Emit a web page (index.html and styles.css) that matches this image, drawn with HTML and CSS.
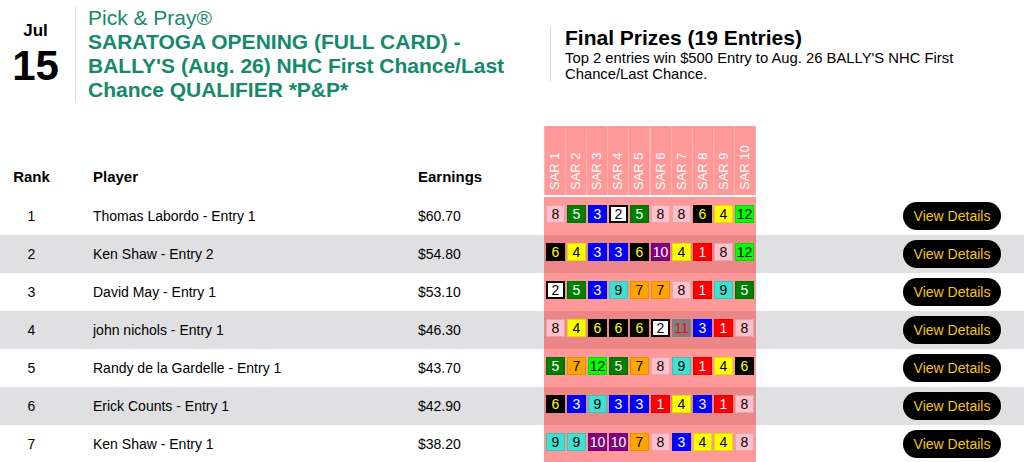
FILE: index.html
```html
<!DOCTYPE html>
<html lang="en">
<head>
<meta charset="utf-8">
<title>Pick &amp; Pray Leaderboard</title>
<link rel="stylesheet" href="styles.css">
</head>
<body>
<header class="header">
  <div class="date">
    <div class="month">Jul</div>
    <div class="day">15</div>
  </div>
  <div class="title-block">
    <div class="brand">Pick &amp; Pray®</div>
    <div class="event">SARATOGA OPENING (FULL CARD) - BALLY'S (Aug. 26) NHC First Chance/Last Chance QUALIFIER *P&amp;P*</div>
  </div>
  <div class="prizes">
    <h2>Final Prizes (19 Entries)</h2>
    <p>Top 2 entries win $500 Entry to Aug. 26 BALLY'S NHC First Chance/Last Chance.</p>
  </div>
</header>

<table class="board">
  <colgroup>
    <col class="c-rank"><col class="c-player"><col class="c-earn"><col class="c-sar"><col class="c-action">
  </colgroup>
  <thead>
    <tr>
      <th class="rank">Rank</th>
      <th class="player">Player</th>
      <th class="earn">Earnings</th>
      <th class="sar">
        <div class="sar-labels">
          <span>SAR 1</span><span>SAR 2</span><span>SAR 3</span><span>SAR 4</span><span>SAR 5</span><span>SAR 6</span><span>SAR 7</span><span>SAR 8</span><span>SAR 9</span><span>SAR 10</span>
        </div>
      </th>
      <th class="action"></th>
    </tr>
  </thead>
  <tbody>
    <tr>
      <td class="rank">1</td><td class="player">Thomas Labordo - Entry 1</td><td class="earn">$60.70</td>
      <td class="sar"><div class="boxes"><span class="b p8">8</span><span class="b p5">5</span><span class="b p3">3</span><span class="b p2">2</span><span class="b p5">5</span><span class="b p8">8</span><span class="b p8">8</span><span class="b p6">6</span><span class="b p4">4</span><span class="b p12">12</span></div></td>
      <td class="action"><a class="btn">View Details</a></td>
    </tr>
    <tr>
      <td class="rank">2</td><td class="player">Ken Shaw - Entry 2</td><td class="earn">$54.80</td>
      <td class="sar"><div class="boxes"><span class="b p6">6</span><span class="b p4">4</span><span class="b p3">3</span><span class="b p3">3</span><span class="b p6">6</span><span class="b p10">10</span><span class="b p4">4</span><span class="b p1">1</span><span class="b p8">8</span><span class="b p12">12</span></div></td>
      <td class="action"><a class="btn">View Details</a></td>
    </tr>
    <tr>
      <td class="rank">3</td><td class="player">David May - Entry 1</td><td class="earn">$53.10</td>
      <td class="sar"><div class="boxes"><span class="b p2">2</span><span class="b p5">5</span><span class="b p3">3</span><span class="b p9">9</span><span class="b p7">7</span><span class="b p7">7</span><span class="b p8">8</span><span class="b p1">1</span><span class="b p9">9</span><span class="b p5">5</span></div></td>
      <td class="action"><a class="btn">View Details</a></td>
    </tr>
    <tr>
      <td class="rank">4</td><td class="player">john nichols - Entry 1</td><td class="earn">$46.30</td>
      <td class="sar"><div class="boxes"><span class="b p8">8</span><span class="b p4">4</span><span class="b p6">6</span><span class="b p6">6</span><span class="b p6">6</span><span class="b p2">2</span><span class="b p11">11</span><span class="b p3">3</span><span class="b p1">1</span><span class="b p8">8</span></div></td>
      <td class="action"><a class="btn">View Details</a></td>
    </tr>
    <tr>
      <td class="rank">5</td><td class="player">Randy de la Gardelle - Entry 1</td><td class="earn">$43.70</td>
      <td class="sar"><div class="boxes"><span class="b p5">5</span><span class="b p7">7</span><span class="b p12">12</span><span class="b p5">5</span><span class="b p7">7</span><span class="b p8">8</span><span class="b p9">9</span><span class="b p1">1</span><span class="b p4">4</span><span class="b p6">6</span></div></td>
      <td class="action"><a class="btn">View Details</a></td>
    </tr>
    <tr>
      <td class="rank">6</td><td class="player">Erick Counts - Entry 1</td><td class="earn">$42.90</td>
      <td class="sar"><div class="boxes"><span class="b p6">6</span><span class="b p3">3</span><span class="b p9">9</span><span class="b p3">3</span><span class="b p3">3</span><span class="b p1">1</span><span class="b p4">4</span><span class="b p3">3</span><span class="b p1">1</span><span class="b p8">8</span></div></td>
      <td class="action"><a class="btn">View Details</a></td>
    </tr>
    <tr>
      <td class="rank">7</td><td class="player">Ken Shaw - Entry 1</td><td class="earn">$38.20</td>
      <td class="sar"><div class="boxes"><span class="b p9">9</span><span class="b p9">9</span><span class="b p10">10</span><span class="b p10">10</span><span class="b p7">7</span><span class="b p8">8</span><span class="b p3">3</span><span class="b p4">4</span><span class="b p4">4</span><span class="b p8">8</span></div></td>
      <td class="action"><a class="btn">View Details</a></td>
    </tr>
  </tbody>
</table>
</body>
</html>
```

FILE: styles.css
```css
html, body {
  margin: 0;
  padding: 0;
  background: #fff;
}
body {
  font-family: "Liberation Sans", Arial, Helvetica, sans-serif;
  color: #000;
}

/* ---------- header ---------- */
.header {
  display: flex;
  align-items: center;
  padding-top: 6px;
}
.date {
  align-self: stretch;
  width: 76px;
  box-sizing: border-box;
  padding-right: 4px;
  border-right: 1px solid #dcdcdc;
  display: flex;
  flex-direction: column;
  justify-content: center;
  align-items: center;
  font-weight: bold;
}
.month {
  font-size: 17px;
  line-height: 18px;
  margin-top: 2px;
}
.day {
  font-size: 42px;
  line-height: 44px;
  margin-top: 4px;
}
.title-block {
  margin-left: 12px;
  width: 440px;
  color: #15896b;
  font-size: 21px;
  line-height: 24px;
}
.brand {
  font-weight: normal;
}
.event {
  font-weight: bold;
}
.prizes {
  margin-left: 22px;
  padding-left: 14px;
  border-left: 1px solid #dcdcdc;
  width: 430px;
}
.prizes h2 {
  margin: 0;
  font-size: 21px;
  line-height: 24px;
  font-weight: bold;
}
.prizes p {
  margin: 0;
  font-size: 14.8px;
  line-height: 16px;
}

/* ---------- table ---------- */
.board {
  margin-top: 24px;
  width: 100%;
  border-collapse: separate;
  border-spacing: 0;
  table-layout: fixed;
  font-size: 14px;
}
.c-rank { width: 63px; }
.c-player { width: 355px; }
.c-earn { width: 126px; }
.c-sar { width: 212px; }

.board th {
  padding: 0 0 10px 0;
  vertical-align: bottom;
  text-align: left;
  font-weight: bold;
  font-size: 15px;
  line-height: 16px;
  border-bottom: 2px solid #fff;
}
.board th.rank,
.board td.rank {
  text-align: center;
}
.board th.player,
.board td.player {
  padding-left: 30px;
}
.board th.sar {
  padding: 0;
  background: #ffb2b2;
}
.sar-labels {
  display: grid;
  grid-template-columns: repeat(10, 1fr);
  column-gap: 1px;
  height: 69px;
  padding: 0 1px;
}
.sar-labels span {
  background: #ff9999;
  writing-mode: vertical-rl;
  transform: rotate(180deg);
  color: #fff;
  font-size: 13px;
  font-weight: normal;
  line-height: 20px;
  padding-top: 5px;
  white-space: nowrap;
}

.board td {
  height: 38px;
  padding: 0;
  vertical-align: middle;
  line-height: 16px;
}
.board tbody tr:nth-child(even) {
  background: #e0e0e2;
}
.board td.sar {
  background: rgba(255, 0, 0, 0.4);
}
.boxes {
  display: flex;
  gap: 2px;
  padding: 0 2px 5px 2px;
}
.b {
  width: 19px;
  height: 18px;
  box-sizing: border-box;
  display: flex;
  align-items: center;
  justify-content: center;
  font-size: 14px;
  border: 1px solid rgba(0, 0, 0, 0.12);
}
.p1 { background: #ff0000; color: #fff; }
.p2 { background: #fff; color: #000; border: 2px solid #000; }
.p3 { background: #0000ff; color: #fff; }
.p4 { background: #ffff00; color: #000; }
.p5 { background: #008000; color: #fff; }
.p6 { background: #000; color: #ffff00; }
.p7 { background: #ffa500; color: #000; }
.p8 { background: #ffc0cb; color: #000; }
.p9 { background: #40e0d0; color: #000; }
.p10 { background: #800080; color: #fff; }
.p11 { background: #808080; color: #ff0000; border-color: #808080; }
.p12 { background: #00ff00; color: #000; }

.board td.action {
  text-align: right;
  padding-right: 23px;
}
.btn {
  display: inline-block;
  width: 98px;
  height: 28px;
  line-height: 28px;
  border-radius: 14px;
  background: #000;
  color: #f5c518;
  text-align: center;
  font-size: 14px;
  vertical-align: middle;
  cursor: pointer;
}
```
